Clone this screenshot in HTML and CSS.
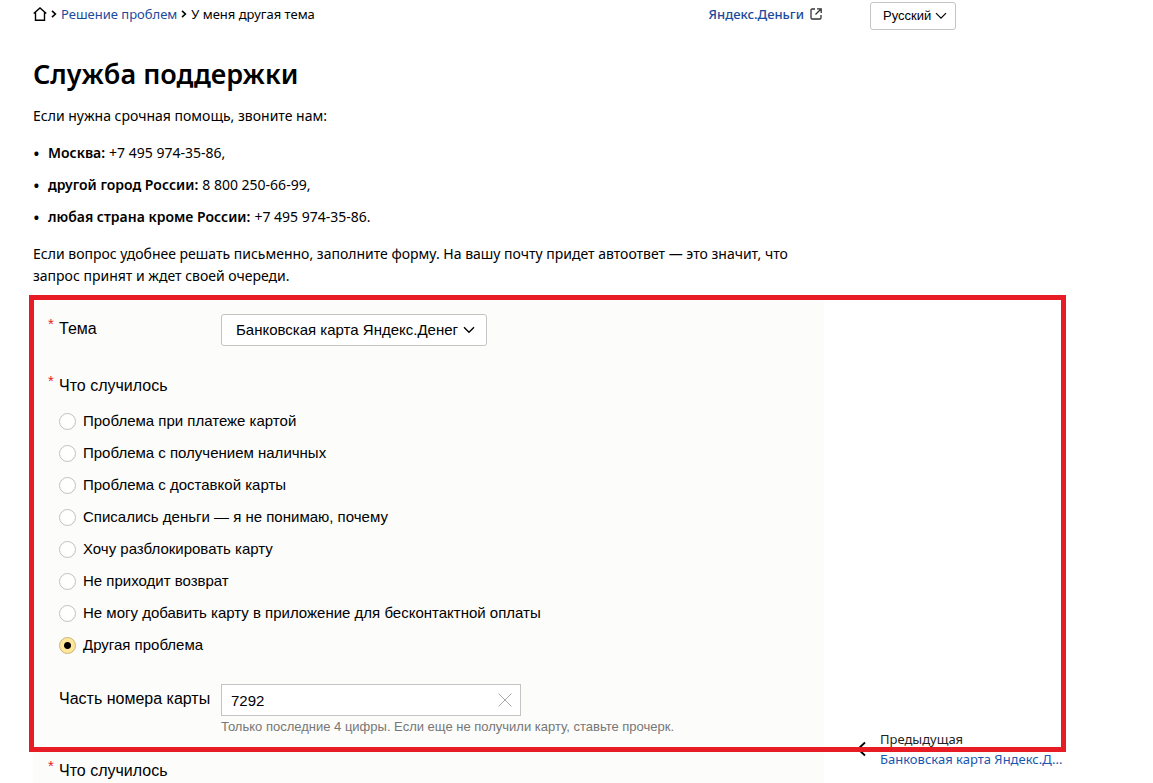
FILE: index.html
```html
<!DOCTYPE html>
<html lang="ru">
<head>
<meta charset="utf-8">
<meta name="viewport" content="width=device-width, initial-scale=1">
<title>Служба поддержки</title>
<link rel="stylesheet" href="styles.css">
</head>
<body>
<div class="page">
  <main class="main">
    <header class="topbar">
      <nav class="crumbs" aria-label="Навигация">
        <a class="crumbs-home" href="#" aria-label="Главная"><svg width="14" height="14" viewBox="0 0 14 14"><path d="M0.7 6.6 7 1l6.3 5.6M2.5 5.5v7.8h9V5.5" fill="none" stroke="#000" stroke-width="1.4"/></svg></a>
        <svg class="crumbs-sep" width="6" height="8" viewBox="0 0 6 8"><path d="M1 .8 4.4 4 1 7.2" fill="none" stroke="#000" stroke-width="1.6"/></svg>
        <a class="link" href="#">Решение проблем</a>
        <svg class="crumbs-sep" width="6" height="8" viewBox="0 0 6 8"><path d="M1 .8 4.4 4 1 7.2" fill="none" stroke="#000" stroke-width="1.6"/></svg>
        <span>У меня другая тема</span>
      </nav>
      <a class="service link" href="#">Яндекс.Деньги
        <svg width="12" height="12" viewBox="0 0 12 12"><path d="M5 1H2.2Q1 1 1 2.2v7.6Q1 11 2.2 11h7.6q1.2 0 1.2-1.2V7M7 .9h4.2V5M11 1 5.5 6.5" fill="none" stroke="#333" stroke-width="1.3"/></svg>
      </a>
    </header>
    <h1 class="title">Служба поддержки</h1>
    <p class="text">Если нужна срочная помощь, звоните нам:</p>
    <ul class="phones">
      <li><b>Москва:</b> +7 495 974-35-86,</li>
      <li><b>другой город России:</b> 8 800 250-66-99,</li>
      <li><b>любая страна кроме России:</b> +7 495 974-35-86.</li>
    </ul>
    <p class="text">Если вопрос удобнее решать письменно, заполните форму. На вашу почту придет автоответ — это значит, что запрос принят и ждет своей очереди.</p>

    <form class="form">
      <div class="marked">
        <div class="row">
          <label class="label required" for="topic">Тема</label>
          <div class="select">
            <select id="topic" class="select-control"><option>Банковская карта Яндекс.Денег</option></select>
            <svg class="select-arrow" width="12" height="8" viewBox="0 0 12 8"><path d="m1 1.2 5 5 5-5" fill="none" stroke="#000" stroke-width="1.4"/></svg>
          </div>
        </div>
        <fieldset class="group">
          <legend class="label required">Что случилось</legend>
          <label class="option"><input class="radio" type="radio" name="issue">Проблема при платеже картой</label>
          <label class="option"><input class="radio" type="radio" name="issue">Проблема с получением наличных</label>
          <label class="option"><input class="radio" type="radio" name="issue">Проблема с доставкой карты</label>
          <label class="option"><input class="radio" type="radio" name="issue">Списались деньги — я не понимаю, почему</label>
          <label class="option"><input class="radio" type="radio" name="issue">Хочу разблокировать карту</label>
          <label class="option"><input class="radio" type="radio" name="issue">Не приходит возврат</label>
          <label class="option"><input class="radio" type="radio" name="issue">Не могу добавить карту в приложение для бесконтактной оплаты</label>
          <label class="option"><input class="radio" type="radio" name="issue" checked>Другая проблема</label>
        </fieldset>
        <div class="row">
          <label class="label" for="card">Часть номера карты</label>
          <div class="field">
            <div class="input">
              <input id="card" class="input-control" type="text" value="7292">
              <button class="input-clear" type="button" aria-label="Очистить"><svg width="14" height="14" viewBox="0 0 14 14"><path d="m.5.5 13 13M13.5.5l-13 13" fill="none" stroke="#aaa"/></svg></button>
            </div>
            <p class="hint">Только последние 4 цифры. Если еще не получили карту, ставьте прочерк.</p>
          </div>
        </div>
      </div>
      <div class="next label required">Что случилось</div>
    </form>
  </main>

  <aside class="side">
    <div class="select select-small">
      <select class="select-control" aria-label="Язык"><option>Русский</option></select>
      <svg class="select-arrow" width="12" height="8" viewBox="0 0 12 8"><path d="m1 1.2 5 5 5-5" fill="none" stroke="#000" stroke-width="1.2"/></svg>
    </div>
    <a class="prev" href="#">
      <svg width="10" height="16" viewBox="0 0 10 16"><path d="M9 1.5 2 8l7 6.5" fill="none" stroke="#000" stroke-width="1.8"/></svg>
      <span class="prev-body">
        <span class="prev-caption">Предыдущая</span>
        <span class="prev-title">Банковская карта Яндекс.Д...</span>
      </span>
    </a>
  </aside>
</div>
</body>
</html>
```
FILE: styles.css
```css
* {
  box-sizing: border-box;
}

body {
  margin: 0;
  background: #fff;
  color: #000;
  font: 14px/22px "Noto Sans", "Open Sans", sans-serif;
}

.page {
  display: grid;
  grid-template-columns: minmax(0, 1fr) 210px;
  gap: 32px;
  height: 100vh;
  padding: 0 87px 0 33px;
  overflow: hidden;
}

.link {
  color: #1a4a9c;
  text-decoration: none;
}

.topbar {
  display: flex;
  justify-content: space-between;
  padding: 4px 2px 0 0;
  font-size: 13px;
  line-height: 20px;
}

.crumbs {
  display: flex;
  align-items: center;
  gap: 4px;
}

.crumbs-home {
  display: flex;
}

.service {
  display: flex;
  align-items: center;
  gap: 6px;
  font-weight: 500;
}

.title {
  margin: 32px 0 0;
  font-size: 27px;
  line-height: 36px;
  font-weight: 600;
}

.text {
  margin: 13px 0 0;
}

.phones {
  margin: 15px 0;
  padding: 0;
  list-style: none;
}

.phones li {
  display: flex;
  gap: 4px;
  margin-bottom: 10px;
}

.phones li::before {
  content: "•";
  width: 11px;
  font-size: 18px;
}

.phones b {
  font-weight: 600;
}

.form {
  margin-top: 8px;
  background: #fcfcfa;
  font: 15px/20px "Liberation Sans", Arial, sans-serif;
}

.marked {
  position: relative;
  padding: 19px 26px 15px;
}

.marked::after {
  content: "";
  position: absolute;
  inset: 0 -242px 0 -4px;
  border: 5px solid #e81c24;
  pointer-events: none;
}

.row {
  display: grid;
  grid-template-columns: 162px minmax(0, 1fr);
}

.label {
  padding: 5px 0 3px;
  font-size: 16px;
}

.required {
  position: relative;
}

.required::before {
  content: "*";
  position: absolute;
  top: 0;
  left: -11px;
  color: #e81c24;
  font-size: 15px;
}

.select {
  position: relative;
  justify-self: start;
}

.select-control {
  appearance: none;
  height: 32px;
  padding: 0 27px 1px 14px;
  border: 1px solid #c4c4c2;
  border-radius: 3px;
  background: #fff;
  color: #000;
  font: 15px "Liberation Sans", Arial, sans-serif;
}

.select-arrow {
  position: absolute;
  top: 12px;
  right: 12px;
  pointer-events: none;
}

.select-small .select-control {
  height: 28px;
  padding: 0 23px 1px 12px;
  font-size: 13px;
}

.select-small .select-arrow {
  top: 10px;
  right: 9px;
}

.group {
  margin: 25px 0 23px;
  padding: 0;
  border: 0;
}

.group .label {
  margin-bottom: 6px;
}

.option {
  display: flex;
  align-items: center;
  gap: 7px;
  height: 32px;
  line-height: 22px;
}

.radio {
  appearance: none;
  width: 17px;
  height: 17px;
  margin: 0;
  border: 1px solid #c0c0be;
  border-radius: 50%;
  background: #fff;
}

.radio:checked {
  border-color: #c9b478;
  background: radial-gradient(circle, #000 3px, #ffe699 4px);
}

.input {
  display: flex;
  align-items: center;
  max-width: 300px;
  height: 32px;
  border: 1px solid #c4c4c2;
  background: #fff;
}

.input-control {
  flex: 1;
  min-width: 0;
  padding: 0 9px;
  border: 0;
  outline: 0;
  background: none;
  font: 15px "Liberation Sans", Arial, sans-serif;
}

.input-clear {
  display: flex;
  padding: 0 8px;
  border: 0;
  background: none;
}

.hint {
  margin: 1px 0 0;
  color: #777;
  font-size: 13px;
}

.next {
  margin: 4px 26px 0;
}

.side {
  display: flex;
  flex-direction: column;
  justify-content: space-between;
  align-items: flex-start;
  padding: 2px 0 15px;
}

.side .select {
  margin-left: 14px;
}

.prev {
  display: flex;
  align-items: center;
  gap: 14px;
  font-size: 13px;
  line-height: 20px;
  text-decoration: none;
  white-space: nowrap;
}

.prev svg {
  flex: none;
}

.prev-body {
  display: grid;
}

.prev-caption {
  color: #222;
}

.prev-title {
  color: #1a56b0;
}
```
